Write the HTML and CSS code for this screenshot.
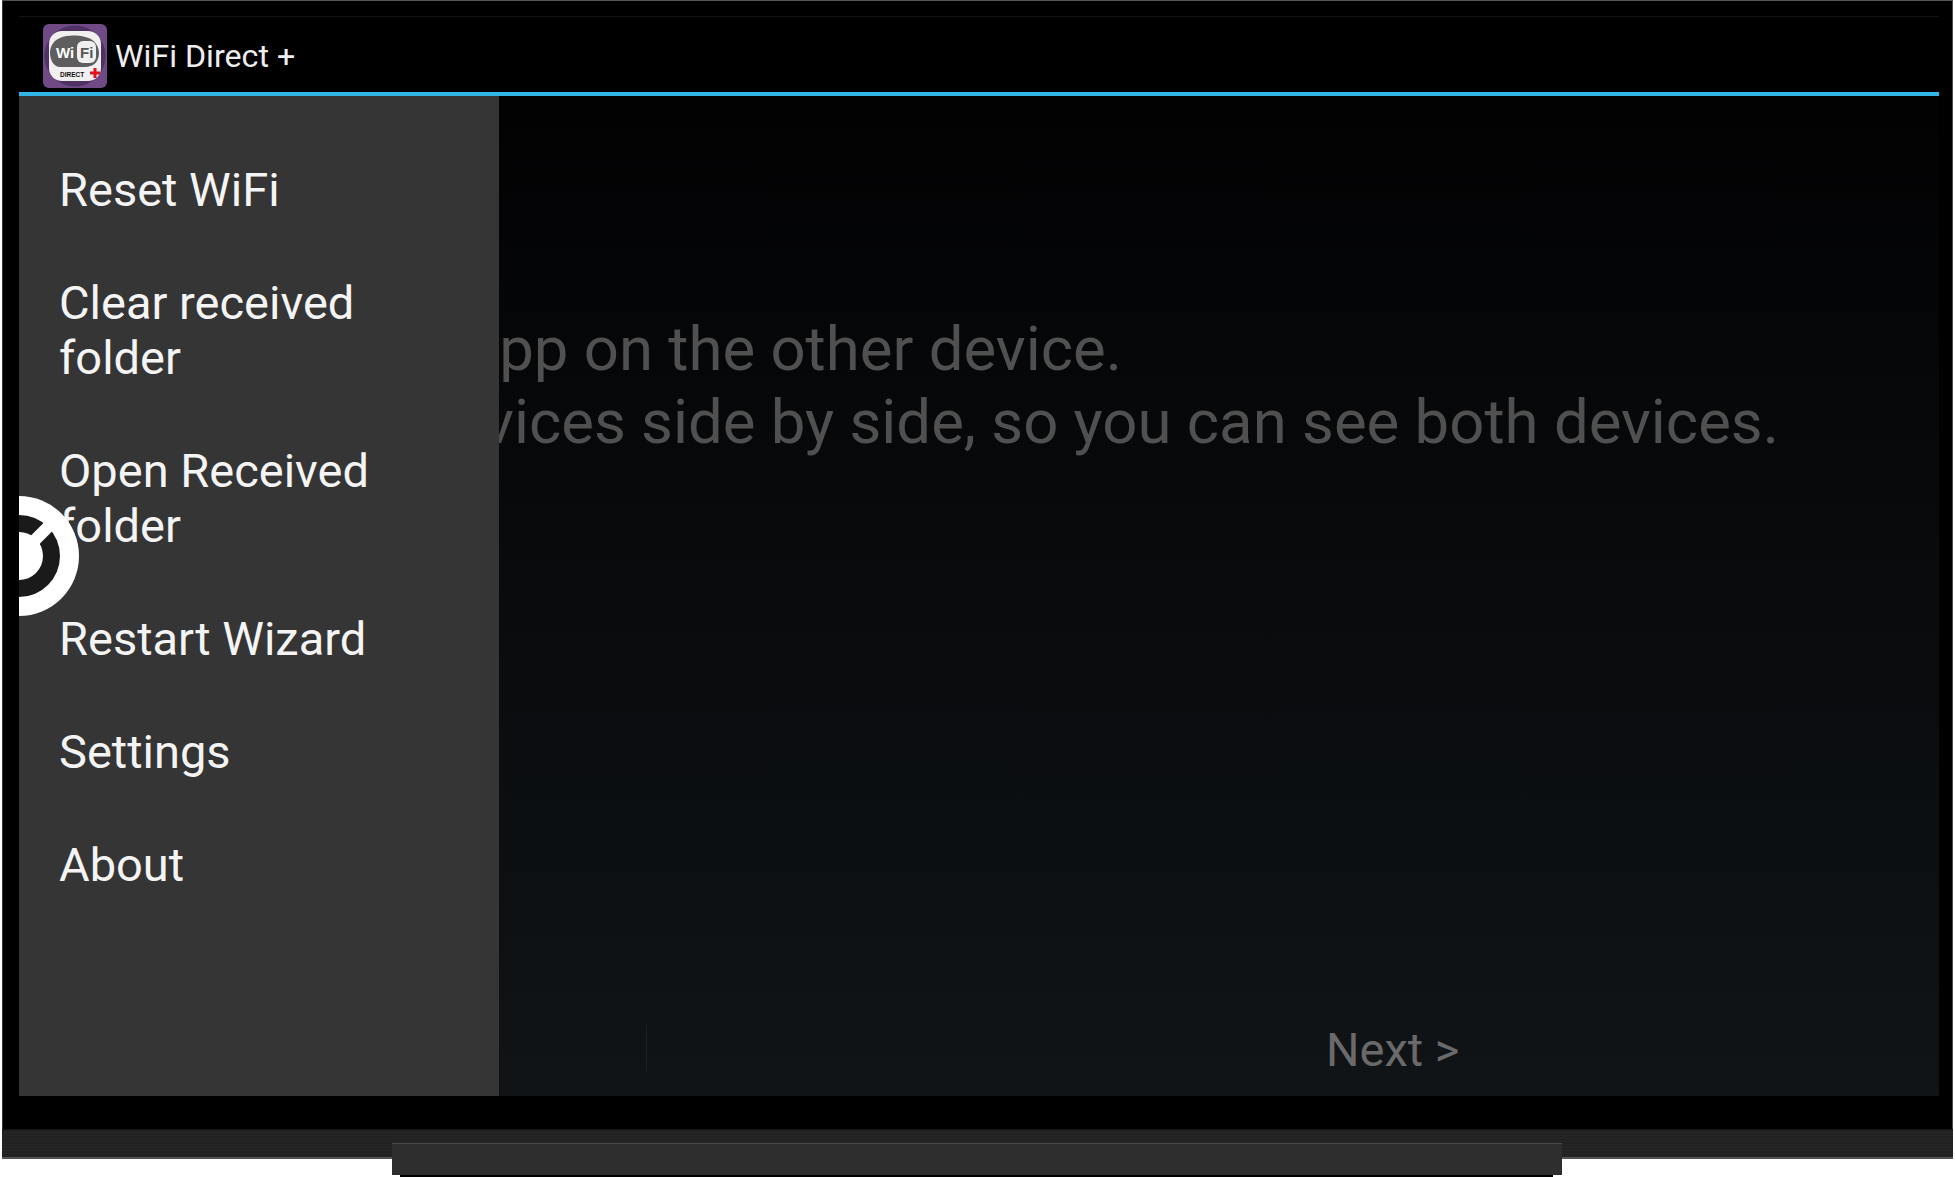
FILE: index.html
```html
<!DOCTYPE html>
<html lang="en">
<head>
  <meta charset="UTF-8">
  <meta name="viewport" content="width=device-width, initial-scale=1.0">
  <title>WiFi Direct +</title>
  <link rel="stylesheet" href="styles.css">
</head>
<body>
  <div class="device">
    <div class="bezel">
      <div class="screen">
        <header class="action-bar">
          <svg class="app-icon" viewBox="0 0 64 64" aria-hidden="true">
            <rect width="64" height="64" rx="6" fill="#6f4a85"/>
            <circle cx="32" cy="32" r="30.5" fill="#4f3163"/>
            <rect x="6" y="7" width="52" height="50" rx="13" fill="#f1efef"/>
            <path d="M17 14C24 11 34 11 42 13C50 14 56 21 56 29C56 38 50 43 42 43H17C11 43 7 36 7 29C7 22 11 16 17 14Z" fill="#5e5e5e"/>
            <rect x="34" y="17" width="19" height="22" rx="6" fill="#efefef"/>
            <text x="13" y="34" class="icon-wi">Wi</text>
            <text x="37" y="34" class="icon-fi">Fi</text>
            <text x="17" y="53" class="icon-direct">DIRECT</text>
            <path d="M50.5 44H53.5V47.5H57V50.5H53.5V54H50.5V50.5H47V47.5H50.5Z" fill="#e0101c"/>
          </svg>
          <span class="app-title">WiFi Direct +</span>
        </header>
        <main class="content">
          <div class="instructions">
            <p>Launch the app on the other device.</p>
            <p>Place the devices side by side, so you can see both devices.</p>
          </div>
          <div class="buttons">
            <span class="divider"></span>
            <span class="next">Next &gt;</span>
          </div>
        </main>
        <nav class="drawer">
          <a class="item">Reset WiFi</a>
          <a class="item">Clear received folder</a>
          <a class="item">Open Received folder</a>
          <a class="item">Restart Wizard</a>
          <a class="item">Settings</a>
          <a class="item">About</a>
        </nav>
        <svg class="float-btn" viewBox="0 0 120 120" aria-hidden="true">
          <circle cx="60" cy="60" r="60" fill="#fff"/>
          <circle cx="60" cy="60" r="41" fill="#1a1a1a"/>
          <circle cx="60" cy="60" r="24" fill="#fff"/>
          <path d="M60 60L94 26" stroke="#fff" stroke-width="12"/>
        </svg>
      </div>
    </div>
    <div class="base"></div>
    <div class="stand"></div>
  </div>
</body>
</html>
```
FILE: styles.css
```css
html, body {
  margin: 0;
  padding: 0;
  background-color: #fff;
}

body {
  font-family: Roboto, sans-serif;
  height: 1177px;
  overflow: hidden;
}

.device {
  position: relative;
  width: 1951px;
  margin-left: 2px;
}

.bezel {
  background-color: #000;
  border-top: 1px solid #555;
  border-left: 1px solid #3a3a3a;
  border-right: 1px solid #4a4a4a;
  padding: 15px 14px 33px 16px;
}

.screen {
  position: relative;
  width: 1920px;
  height: 1080px;
  overflow: hidden;
  display: flex;
  flex-direction: column;
}

.action-bar {
  height: 72px;
  flex: none;
  background-color: #000;
  border-top: 1px solid #141414;
  border-bottom: 4px solid #33b5e5;
  padding-top: 3px;
  padding-left: 24px;
  display: flex;
  align-items: center;
  gap: 8px;
}

.app-icon {
  width: 64px;
  height: 64px;
  flex: none;
}

.icon-wi, .icon-fi {
  font-family: "Liberation Sans", sans-serif;
  font-weight: 700;
  font-size: 15px;
}

.icon-wi {
  fill: #fff;
}

.icon-fi {
  fill: #555;
}

.icon-direct {
  font-family: "Liberation Sans", sans-serif;
  font-weight: 700;
  font-size: 6.5px;
  fill: #111;
}

.app-title {
  color: #eee;
  font-size: 32.2px;
}

.content {
  flex: 1;
  background: linear-gradient(#020203, #101417);
  display: flex;
  flex-direction: column;
  min-height: 0;
}

.instructions {
  padding-top: 217px;
  padding-left: 128px;
  color: #505050;
  font-size: 61.7px;
  line-height: 73px;
  white-space: nowrap;
}

.instructions p {
  margin: 0;
}

.buttons {
  margin-top: auto;
  height: 94px;
  display: flex;
  align-items: center;
}

.divider {
  width: 1px;
  height: 48px;
  margin-left: 627px;
  background-color: #1c2023;
}

.next {
  margin-left: 679px;
  color: #6a6a6a;
  font-size: 47px;
}

.drawer {
  position: absolute;
  left: 0;
  top: 80px;
  bottom: 0;
  width: 480px;
  box-sizing: border-box;
  padding: 37px 40px 0;
  background-color: #353535;
}

.item {
  display: block;
  padding: 29px 0;
  color: #f4f4f4;
  font-size: 47px;
  line-height: 55px;
}

.float-btn {
  position: absolute;
  left: -60px;
  top: 480px;
  width: 120px;
  height: 120px;
}

.base {
  height: 27px;
  background-color: #232323;
  background-image: repeating-linear-gradient(0deg, #262626 0, #262626 1px, #222 1px, #222 3px);
  border-top: 1px solid #111;
  border-bottom: 2px solid #555;
}

.stand {
  position: absolute;
  left: 390px;
  top: 1143px;
  width: 1170px;
  height: 31px;
  background-color: #2e2e2e;
  border-top: 1px solid #4a4a4a;
}

.stand::after {
  content: "";
  position: absolute;
  left: 8px;
  right: 9px;
  top: 100%;
  height: 2px;
  background-color: #000;
}
```
